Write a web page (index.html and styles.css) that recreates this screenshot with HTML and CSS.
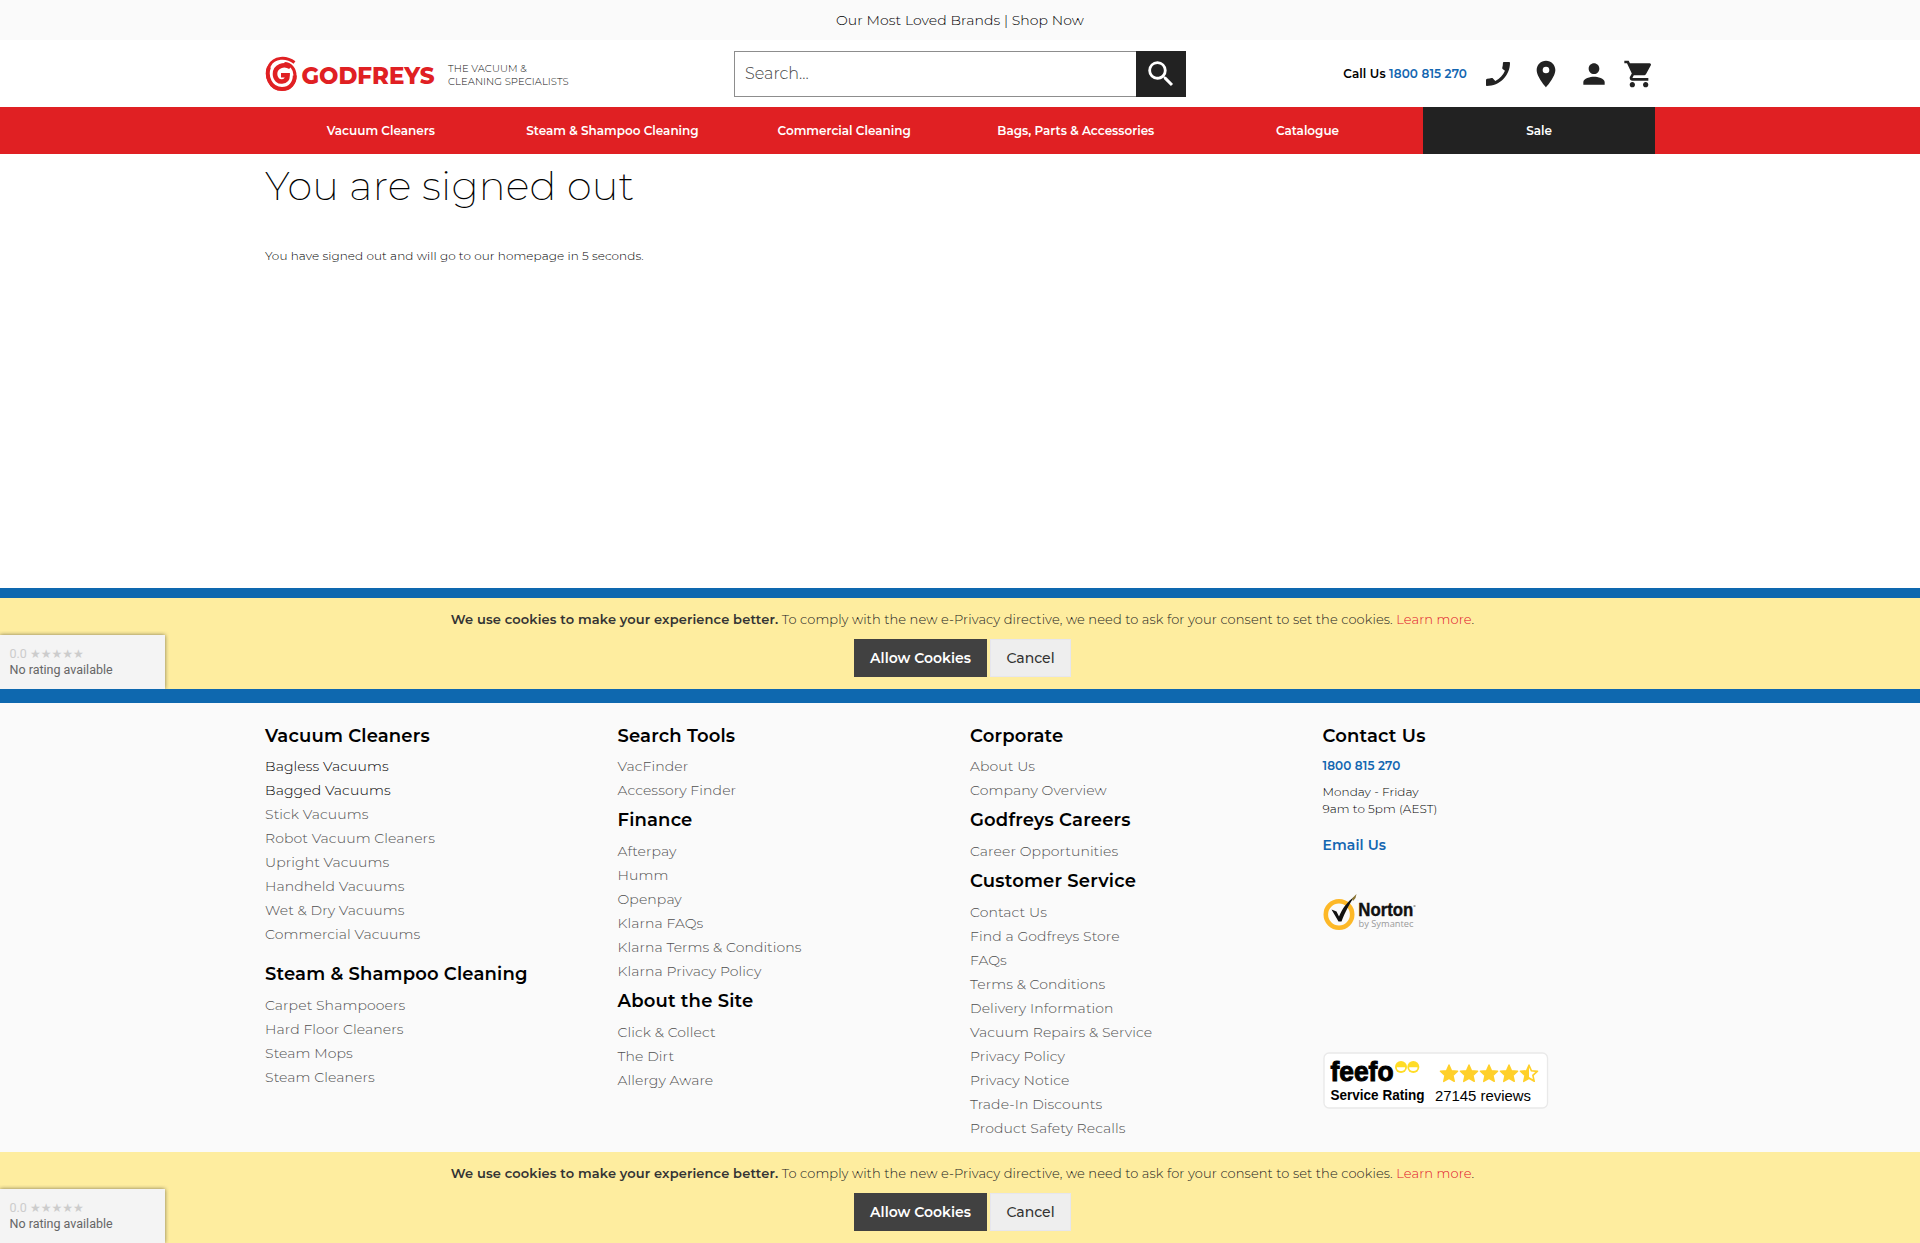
FILE: index.html
```html
<!DOCTYPE html>
<html lang="en">
<head>
<meta charset="utf-8">
<title>You are signed out | Godfreys</title>
<link rel="stylesheet" href="styles.css">
</head>
<body>
<div class="promo">Our Most Loved Brands | Shop Now</div>
<header class="header container">
  <a class="brand">
    <svg class="logo" width="172" height="40" viewBox="0 0 172 40">
      <g fill="none" stroke="#e02023">
        <path stroke-width="3" d="M29.500 8.500C21 2 9 3 4.500 11.500C-.5 21 4.500 35.300 17 35.300C25 35.300 30 29 30 21.500C30 14.500 25.500 9.800 19.500 9.600"/>
        <path stroke-width="4.600" d="M25.500 13.200C19 8.800 10 12.500 10 20C10 25.500 14 27.800 17 27.500C21 27.200 22.600 25 22.600 21.200H16"/>
        <path stroke-width="4" d="M4 13C.5 22 5 35 17 35C25 35 29.800 29 29.800 21.500"/>
      </g>
      <text class="logo-text" x="36.500" y="30" textLength="133" lengthAdjust="spacingAndGlyphs">GODFREYS</text>
    </svg>
    <span class="tagline">THE VACUUM &amp;<br>CLEANING SPECIALISTS</span>
  </a>
  <div class="search">
    <div class="search-field">Search...</div>
    <div class="search-button"><svg width="34" height="34" viewBox="0 0 24 24" fill="#fff"><path d="M15.500 14h-.79l-.28-.27A6.470 6.470 0 0 0 16 9.500 6.500 6.500 0 1 0 9.500 16c1.610 0 3.090-.59 4.230-1.570l.27.28v.79l5 4.990L20.490 19l-4.990-5zm-6 0C7.010 14 5 11.990 5 9.500S7.010 5 9.500 5 14 7.010 14 9.500 11.990 14 9.500 14z"/></svg></div>
  </div>
  <div class="tools">
    <span class="call">Call Us <b>1800 815 270</b></span>
    <svg class="tool-phone" width="32" height="32" viewBox="0 0 24 24"><path d="M21 3.600C21 13.200 13.200 21 3.600 21a.6.6 0 0 1-.6-.6V16.500c0-.5.3-.8.800-.9 1.200-.1 2.300-.3 3.400-.6.400-.1.700 0 1 .3l1.800 1.900C13.400 15.400 15.900 12.700 17.200 9.500L15.500 8.300c-.3-.3-.4-.6-.3-1 .3-1.100.5-2.300.5-3.500 0-.5.400-.8.900-.8h3.800c.300 0 .6.300.6.600z"/></svg>
    <svg class="tool-pin" width="32" height="32" viewBox="0 0 24 24"><path d="M12 2C8.130 2 5 5.130 5 9c0 5.250 7 13 7 13s7-7.750 7-13c0-3.870-3.130-7-7-7zm0 9.500a2.500 2.500 0 0 1 0-5 2.500 2.500 0 0 1 0 5z"/></svg>
    <svg class="tool-user" width="32" height="32" viewBox="0 0 24 24"><path d="M12 12c2.210 0 4-1.790 4-4s-1.790-4-4-4-4 1.790-4 4 1.790 4 4 4zm0 2c-2.670 0-8 1.340-8 4v2h16v-2c0-2.660-5.330-4-8-4z"/></svg>
    <svg class="tool-cart" width="32" height="32" viewBox="0 0 24 24"><path d="M7 18c-1.100 0-1.990.9-1.990 2S5.900 22 7 22s2-.9 2-2-.9-2-2-2zM1 2v2h2l3.600 7.590-1.350 2.450c-.16.28-.25.61-.25.960 0 1.100.9 2 2 2h12v-2H7.420c-.14 0-.25-.11-.25-.25l.03-.12.900-1.630h7.450c.75 0 1.410-.41 1.750-1.030l3.580-6.490A1 1 0 0 0 20 4H5.210l-.94-2H1zm16 16c-1.100 0-1.990.9-1.990 2s.89 2 1.990 2 2-.9 2-2-.9-2-2-2z"/></svg>
  </div>
</header>
<nav class="nav">
  <div class="nav-list container">
    <a>Vacuum Cleaners</a><a>Steam &amp; Shampoo Cleaning</a><a>Commercial Cleaning</a><a>Bags, Parts &amp; Accessories</a><a>Catalogue</a><a class="sale">Sale</a>
  </div>
</nav>
<main class="main container">
  <h1>You are signed out</h1>
  <p>You have signed out and will go to our homepage in 5 seconds.</p>
</main>
<div class="cookie-wrap">
  <section class="cookie">
    <p><b>We use cookies to make your experience better.</b> <span>To comply with the new e-Privacy directive, we need to ask for your consent to set the cookies. <a>Learn more</a>.</span></p>
    <div class="cookie-actions"><button class="allow">Allow Cookies</button><button class="cancel">Cancel</button></div>
    <aside class="rating"><div class="score">0.0 <span>★★★★★</span></div><div>No rating available</div></aside>
  </section>
</div>
<footer class="footer">
  <div class="footer-grid container">
    <div class="col">
      <h3>Vacuum Cleaners</h3>
      <ul class="spaced"><li class="dark">Bagless Vacuums</li><li class="dark">Bagged Vacuums</li><li>Stick Vacuums</li><li>Robot Vacuum Cleaners</li><li>Upright Vacuums</li><li>Handheld Vacuums</li><li>Wet &amp; Dry Vacuums</li><li>Commercial Vacuums</li></ul>
      <h3>Steam &amp; Shampoo Cleaning</h3>
      <ul><li>Carpet Shampooers</li><li>Hard Floor Cleaners</li><li>Steam Mops</li><li>Steam Cleaners</li></ul>
    </div>
    <div class="col">
      <h3>Search Tools</h3>
      <ul><li>VacFinder</li><li>Accessory Finder</li></ul>
      <h3>Finance</h3>
      <ul><li>Afterpay</li><li>Humm</li><li>Openpay</li><li>Klarna FAQs</li><li>Klarna Terms &amp; Conditions</li><li>Klarna Privacy Policy</li></ul>
      <h3>About the Site</h3>
      <ul><li>Click &amp; Collect</li><li>The Dirt</li><li>Allergy Aware</li></ul>
    </div>
    <div class="col">
      <h3>Corporate</h3>
      <ul><li>About Us</li><li>Company Overview</li></ul>
      <h3>Godfreys Careers</h3>
      <ul><li>Career Opportunities</li></ul>
      <h3>Customer Service</h3>
      <ul><li>Contact Us</li><li>Find a Godfreys Store</li><li>FAQs</li><li>Terms &amp; Conditions</li><li>Delivery Information</li><li>Vacuum Repairs &amp; Service</li><li>Privacy Policy</li><li>Privacy Notice</li><li>Trade-In Discounts</li><li>Product Safety Recalls</li></ul>
    </div>
    <div class="col">
      <h3>Contact Us</h3>
      <a class="phone">1800 815 270</a>
      <p class="hours">Monday - Friday<br>9am to 5pm (AEST)</p>
      <a class="email">Email Us</a>
      <svg class="norton" width="104" height="42" viewBox="0 0 104 42">
        <circle cx="16" cy="21.500" r="13.200" fill="none" stroke="#fdb827" stroke-width="4.600"/>
        <path d="M8.500 16.500L13.500 18.500L16 23.500C19 16 24 9 31 4C27 10 22 19 18.500 28.500H15.500Z" fill="#111"/>
        <path d="M29 5.500L33.500 1L32.500 5L30 8Z" fill="#8a7434"/>
        <text class="norton-name" x="35.300" y="23" textLength="55" lengthAdjust="spacingAndGlyphs">Norton</text>
        <text class="norton-by" x="35.500" y="34" textLength="55" lengthAdjust="spacingAndGlyphs">by Symantec</text>
        <path d="M90.500 13h2" stroke="#555"/>
      </svg>
      <svg class="feefo" width="226" height="57" viewBox="0 0 226 57">
        <rect x="1" y="1" width="223.500" height="55" rx="5" fill="#fff" stroke="#e9e9e9" stroke-width="1.300"/>
        <text class="feefo-name" x="7.500" y="28.500" textLength="63" lengthAdjust="spacingAndGlyphs">feefo</text>
        <g fill="#ffdc27"><circle cx="78" cy="15" r="6"/><circle cx="90.300" cy="15" r="6"/></g>
        <path d="M73.800 15.200h8.400a4.200 3.800 0 0 1-8.400 0zM86.100 15.200h8.400a4.200 3.800 0 0 1-8.400 0z" fill="#fff"/>
        <text class="feefo-service" x="7.500" y="48" textLength="94" lengthAdjust="spacingAndGlyphs">Service Rating</text>
        <g fill="#ffd02a" stroke="#ffd02a" stroke-width="1.400" stroke-linejoin="round">
          <path id="star" d="M126 13l2.500 5.700 6.100.6-4.600 4.100 1.300 6-5.300-3.100-5.300 3.100 1.300-6-4.600-4.100 6.100-.6z"/>
          <use href="#star" x="20"/><use href="#star" x="40"/><use href="#star" x="60"/><use href="#star" x="80"/>
        </g>
        <path d="M206 15.500l1.900 4.100 4.300.5-3.200 2.900.9 4.200-3.900-2.200z" fill="#fff"/>
        <text class="feefo-count" x="112" y="49" textLength="96" lengthAdjust="spacingAndGlyphs">27145 reviews</text>
      </svg>
    </div>
  </div>
</footer>
<section class="cookie">
  <p><b>We use cookies to make your experience better.</b> <span>To comply with the new e-Privacy directive, we need to ask for your consent to set the cookies. <a>Learn more</a>.</span></p>
  <div class="cookie-actions"><button class="allow">Allow Cookies</button><button class="cancel">Cancel</button></div>
  <aside class="rating"><div class="score">0.0 <span>★★★★★</span></div><div>No rating available</div></aside>
</section>
</body>
</html>
```
FILE: styles.css
```css
* { box-sizing: border-box; }
body { margin: 0; background: #fff; color: #000; font-family: Montserrat, Inter, "Open Sans", sans-serif; font-size: 13px; font-weight: 300; white-space: nowrap; }
h1, h3, p, ul { margin: 0; padding: 0; list-style: none; }
.container { width: 1390px; margin: 0 auto; }
.promo { height: 40px; background: #fafafa; text-align: center; font-size: 14px; line-height: 40px; letter-spacing: .08px; }

.header { height: 67px; display: flex; align-items: center; }
.brand { display: flex; width: 469px; align-items: center; }
.logo { flex: none; }
.logo-text { font: 800 23.500px Montserrat, Lato, sans-serif; fill: #e02023; }
.tagline { margin: 3px 0 0 11px; font-size: 10px; line-height: 13px; letter-spacing: .06px; color: #111; }
.search { display: flex; width: 452px; height: 46px; }
.search-field { flex: 1; border: 1px solid #8d8d8d; border-right: 0; padding-left: 10px; font-size: 16px; line-height: 43px; color: #444; }
.search-button { width: 50px; background: #222; display: flex; align-items: center; justify-content: center; }
.tools { display: flex; align-items: center; margin-left: auto; fill: #222; }
.call { font-size: 12px; font-weight: 600; letter-spacing: .1px; margin-right: 15px; }
.call b, .phone, .email { color: #1366b1; font-weight: 600; }
.tool-pin { margin-left: 16px; }
.tool-user { margin-left: 16px; }
.tool-cart { margin: 0 0 0 13px; }

.nav { height: 47px; background: #e02023; }
.nav-list { display: grid; grid-template-columns: repeat(6, 1fr); text-align: center; line-height: 47px; color: #fff; font-size: 12px; font-weight: 600; }
.sale { background: #222; }

.main { height: 434px; padding-top: 8px; }
h1 { font-size: 40px; line-height: 48px; font-weight: 200; letter-spacing: .2px; }
.main p { margin-top: 37px; font-size: 12px; line-height: 18px; letter-spacing: .08px; }

.cookie-wrap { border-top: 10px solid #0e68af; border-bottom: 14px solid #0e68af; }
.cookie { position: relative; height: 91px; padding-top: 12px; background: #feed9f; color: #333; text-align: center; }
.cookie p { padding-left: 5px; font-size: 13px; line-height: 19px; letter-spacing: .1px; }
.cookie p span { color: #222; }
.cookie b { font-weight: 600; letter-spacing: .13px; }
.cookie p a { color: #e0102a; }
.cookie-actions { display: flex; gap: 3px; justify-content: center; margin-top: 10px; padding-left: 5px; }
.cookie button { height: 38px; padding: 0; border: 1px solid #414141; font: 600 14px Montserrat, Inter, sans-serif; }
.cookie .allow { width: 133px; background: #414141; color: #fff; }
.cookie .cancel { width: 81px; background: #eee; border-color: #e6e6ee; color: #333; font-weight: 500; }
.rating { position: absolute; left: 0; bottom: 0; width: 165px; height: 54px; padding: 11px 0 0 9.500px; background: #f4f4f4; box-shadow: 0 0 4px rgba(0,0,0,.5); clip-path: inset(-4px -4px 0 0); text-align: left; font: 12.500px/15px Roboto, sans-serif; color: #666; }
.score { color: #ccc; }
.score span { font: 12px/15px "DejaVu Sans", sans-serif; }

.footer { height: 449px; background: #fafafa; padding-top: 15px; }
.footer-grid { display: grid; grid-template-columns: repeat(4, 352.500px); }
h3 { font-size: 18px; line-height: 35.750px; font-weight: 600; letter-spacing: .17px; }
h3:first-child { line-height: 36px; }
h3 + ul { padding-bottom: 1px; }
li { font-size: 14px; line-height: 24px; letter-spacing: .1px; color: #505050; }
.dark { color: #000; }
.spaced { margin-bottom: 10px; }
.phone, .email { display: block; font-size: 12px; line-height: 24px; letter-spacing: .1px; }
.email { font-size: 14px; margin-top: 16px; }
.hours { font-size: 12px; line-height: 17px; margin-top: 5px; letter-spacing: .06px; }
.norton, .feefo { display: block; }
.norton { margin-top: 36px; }
.feefo { margin-top: 117px; }
.norton-name { font: 700 17.500px "Liberation Sans", sans-serif; fill: #111; stroke: #111; stroke-width: .4px; }
.norton-by { font: 9.500px "Open Sans", sans-serif; fill: #999; }
.feefo-name { font: 700 27px "Liberation Sans", sans-serif; stroke: #000; }
.feefo-service { font: 700 14.500px "Liberation Sans", sans-serif; }
.feefo-count { font: 14.500px "Liberation Sans", sans-serif; }
```
